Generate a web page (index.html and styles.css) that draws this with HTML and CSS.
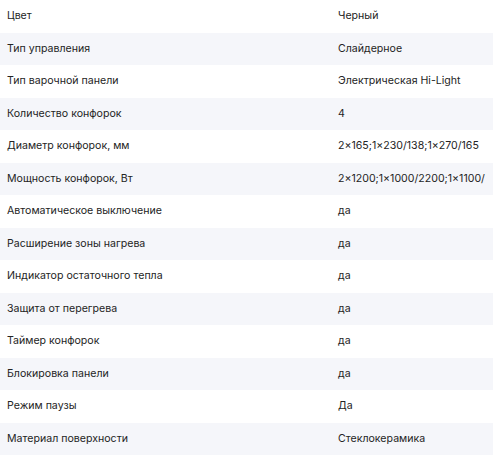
FILE: index.html
```html
<!DOCTYPE html>
<html lang="ru">
<head>
<meta charset="utf-8">
<link rel="stylesheet" href="styles.css">
</head>
<body>
<div class="specs">
  <div class="row"><div class="name">Цвет</div><div class="value">Черный</div></div>
  <div class="row"><div class="name">Тип управления</div><div class="value">Слайдерное</div></div>
  <div class="row"><div class="name">Тип варочной панели</div><div class="value">Электрическая Hi-Light</div></div>
  <div class="row"><div class="name">Количество конфорок</div><div class="value">4</div></div>
  <div class="row"><div class="name">Диаметр конфорок, мм</div><div class="value">2×165;1×230/138;1×270/165</div></div>
  <div class="row"><div class="name">Мощность конфорок, Вт</div><div class="value clip">2×1200;1×1000/2200;1×1100/<wbr>2200</div></div>
  <div class="row"><div class="name">Автоматическое выключение</div><div class="value">да</div></div>
  <div class="row"><div class="name">Расширение зоны нагрева</div><div class="value">да</div></div>
  <div class="row"><div class="name">Индикатор остаточного тепла</div><div class="value">да</div></div>
  <div class="row"><div class="name">Защита от перегрева</div><div class="value">да</div></div>
  <div class="row"><div class="name">Таймер конфорок</div><div class="value">да</div></div>
  <div class="row"><div class="name">Блокировка панели</div><div class="value">да</div></div>
  <div class="row"><div class="name">Режим паузы</div><div class="value">Да</div></div>
  <div class="row"><div class="name">Материал поверхности</div><div class="value">Стеклокерамика</div></div>
</div>
</body>
</html>
```
FILE: styles.css
```css
html, body {
  margin: 0;
  padding: 0;
  background: #ffffff;
}
body {
  font-family: Inter, "Noto Sans", sans-serif;
  font-size: 10.6px;
  line-height: 14px;
  color: #242424;
}
.specs {
  width: 493px;
}
.row {
  display: grid;
  grid-template-columns: 338px 1fr;
  height: 32.5px;
  align-items: center;
}
.row:nth-child(even) {
  background: #f5f6fa;
}
.name {
  padding-left: 7px;
  white-space: nowrap;
}
.value {
  white-space: nowrap;
}
.clip {
  white-space: normal;
  height: 14px;
  overflow: hidden;
  margin-right: -5px;
}
```
